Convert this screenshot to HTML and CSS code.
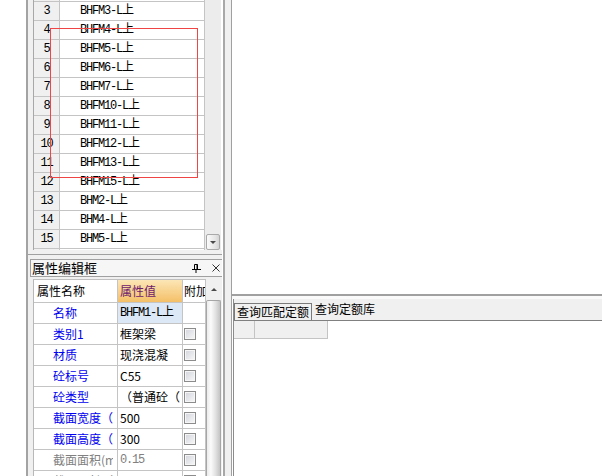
FILE: index.html
```html
<!DOCTYPE html>
<html lang="zh-CN">
<head>
<meta charset="utf-8">
<title>属性编辑</title>
<link rel="stylesheet" href="styles.css">
</head>
<body>
<div class="app">
  <div class="strip"></div>
  <div class="dock">
    <div class="list-panel">
      <div class="list-grid">
        <div class="list-rows">
          <div class="list-inner">
            <div class="lrow"><span class="lnum"></span><span class="lname"></span></div>
            <div class="lrow"><span class="lnum">3</span><span class="lname">BHFM3-L上</span></div>
            <div class="lrow"><span class="lnum">4</span><span class="lname">BHFM4-L上</span></div>
            <div class="lrow"><span class="lnum">5</span><span class="lname">BHFM5-L上</span></div>
            <div class="lrow"><span class="lnum">6</span><span class="lname">BHFM6-L上</span></div>
            <div class="lrow"><span class="lnum">7</span><span class="lname">BHFM7-L上</span></div>
            <div class="lrow"><span class="lnum">8</span><span class="lname">BHFM10-L上</span></div>
            <div class="lrow"><span class="lnum">9</span><span class="lname">BHFM11-L上</span></div>
            <div class="lrow"><span class="lnum">10</span><span class="lname">BHFM12-L上</span></div>
            <div class="lrow"><span class="lnum">11</span><span class="lname">BHFM13-L上</span></div>
            <div class="lrow"><span class="lnum">12</span><span class="lname">BHFM15-L上</span></div>
            <div class="lrow"><span class="lnum">13</span><span class="lname">BHM2-L上</span></div>
            <div class="lrow"><span class="lnum">14</span><span class="lname">BHM4-L上</span></div>
            <div class="lrow"><span class="lnum">15</span><span class="lname">BHM5-L上</span></div>
            <div class="lrow"><span class="lnum"></span><span class="lname"></span></div>
          </div>
        </div>
        <div class="lscroll"><div class="sbtn"><i class="tri-down"></i></div></div>
      </div>
    </div>
    <div class="prop-title">
      <span class="ttl">属性编辑框</span>
      <svg class="pin" width="9" height="9" viewBox="0 0 9 9"><path d="M2.5 0.5h3v5h-3z M5 0.5v5 M0 5.5h9 M4 6v3" stroke="#000" stroke-width="1" fill="none"/></svg>
      <svg class="close" width="8" height="8" viewBox="0 0 8 8"><path d="M0.5 0.5l7 7M7.5 0.5l-7 7" stroke="#333" stroke-width="1" fill="none"/></svg>
    </div>
    <div class="prop-grid">
      <div class="ptable">
        <div class="phead">
          <div class="pname">属性名称</div>
          <div class="pval">属性值</div>
          <div class="pext"><span class="clip">附加</span></div>
        </div>
        <div class="prow">
          <div class="pname"><span class="clip">名称</span></div>
          <div class="pval sel"><span class="clip mono">BHFM1-L上</span></div>
          <div class="pext"></div>
        </div>
        <div class="prow">
          <div class="pname"><span class="clip">类别1</span></div>
          <div class="pval"><span class="clip">框架梁</span></div>
          <div class="pext"><span class="chk"></span></div>
        </div>
        <div class="prow">
          <div class="pname"><span class="clip">材质</span></div>
          <div class="pval"><span class="clip">现浇混凝</span></div>
          <div class="pext"><span class="chk"></span></div>
        </div>
        <div class="prow">
          <div class="pname"><span class="clip">砼标号</span></div>
          <div class="pval"><span class="clip">C55</span></div>
          <div class="pext"><span class="chk"></span></div>
        </div>
        <div class="prow">
          <div class="pname"><span class="clip">砼类型</span></div>
          <div class="pval"><span class="clip">（普通砼（</span></div>
          <div class="pext"><span class="chk"></span></div>
        </div>
        <div class="prow">
          <div class="pname"><span class="clip">截面宽度（</span></div>
          <div class="pval"><span class="clip">500</span></div>
          <div class="pext"><span class="chk"></span></div>
        </div>
        <div class="prow">
          <div class="pname"><span class="clip">截面高度（</span></div>
          <div class="pval"><span class="clip">300</span></div>
          <div class="pext"><span class="chk"></span></div>
        </div>
        <div class="prow dim">
          <div class="pname"><span class="clip">截面面积(m</span></div>
          <div class="pval"><span class="clip mono">0.15</span></div>
          <div class="pext"><span class="chk"></span></div>
        </div>
        <div class="prow dim">
          <div class="pname"><span class="clip">截面周长（</span></div>
          <div class="pval"><span class="clip mono"></span></div>
          <div class="pext"><span class="chk"></span></div>
        </div>
      </div>
      <div class="pscroll"><div class="sup"><i class="tri-up"></i></div><div class="thumb"></div></div>
    </div>
  </div>
  <div class="splitter"></div>
  <div class="main">
    <div class="canvas"></div>
    <div class="hsplit"></div>
    <div class="query">
      <div class="tabs"><span class="tab active">查询匹配定额</span><span class="tab">查询定额库</span></div>
      <div class="qbody"><div class="qhead"><span class="qc1"></span><span class="qc2"></span></div></div>
    </div>
  </div>
  <div class="sel-rect"></div>
</div>
</body>
</html>
```
FILE: styles.css
```css
* { box-sizing: content-box; }
html, body { margin: 0; padding: 0; }
body {
  width: 602px;
  height: 476px;
  overflow: hidden;
  background: #fff;
  font-family: "Noto Sans CJK SC", "Noto Sans", sans-serif;
  font-size: 12px;
  color: #000;
}
.app {
  position: relative;
  display: flex;
  width: 602px;
  height: 476px;
  overflow: hidden;
}
.strip { width: 26px; flex: none; background: #fff; }
.dock {
  width: 194px;
  flex: none;
  border-left: 2px solid #a3a3a3;
  background: #f0f0f0;
  display: flex;
  flex-direction: column;
}
.mono {
  font-family: "Liberation Mono", "Noto Sans CJK SC", monospace;
  letter-spacing: -1.2px;
}

/* list grid */
.list-panel {
  flex: none;
  height: 254px;
  border-bottom: 1px solid #a0a0a0;
  padding-left: 5px;
}
.list-grid {
  height: 250px;
  display: flex;
  overflow: hidden;
  border-left: 1px solid #a8a8a8;
  background: #fff;
}
.list-rows { flex: 1; overflow: hidden; }
.list-inner { margin-top: -17px; }
.lrow {
  display: flex;
  height: 18px;
  border-bottom: 1px solid #c4c4c4;
  line-height: 18px;
  font-family: "Liberation Mono", "Noto Sans CJK SC", monospace;
  font-size: 12px;
  letter-spacing: -1.2px;
  white-space: nowrap;
}
.lnum {
  width: 25px;
  flex: none;
  border-right: 1px solid #c4c4c4;
  background: #f0f0f0;
  text-align: center;
}
.lname {
  flex: 1;
  padding-left: 20px;
  border-right: 1px solid #c4c4c4;
  overflow: hidden;
}
.lscroll {
  width: 16px;
  flex: none;
  border-right: 1px solid #fff;
  background: #ececec;
  display: flex;
  flex-direction: column;
  justify-content: flex-end;
}
.sbtn {
  height: 14px;
  margin: 0 1px 0 1px;
  border: 1px solid #a9a9a9;
  border-radius: 2px;
  background: linear-gradient(to right, #fbfbfb, #e4e4e4 70%, #d4d4d4);
  display: flex;
  align-items: center;
  justify-content: center;
}
.tri-down {
  width: 0; height: 0;
  border-left: 3px solid transparent;
  border-right: 3px solid transparent;
  border-top: 3px solid #4a4a4a;
}
.tri-up {
  width: 0; height: 0;
  border-left: 3px solid transparent;
  border-right: 3px solid transparent;
  border-bottom: 3px solid #4a4a4a;
}

/* property title */
.prop-title {
  flex: none;
  margin: 4px -2px 0 2px;
  height: 16px;
  border: 1px solid #a0a0a0;
  background: #f6f6f6;
  display: flex;
  align-items: center;
  padding-left: 1px;
}
.ttl { flex: 1; font-size: 13px; line-height: 16px; }
.pin { margin-right: 11px; }
.close { margin-right: 3px; }

/* property grid */
.prop-grid {
  flex: 1;
  min-height: 0;
  margin: 2px 0 0 5px;
  display: flex;
  overflow: hidden;
}
.ptable {
  width: 172px;
  flex: none;
  border-left: 1px solid #b8b8b8;
  border-top: 1px solid #c0c0c0;
  background: #fff;
}
.phead, .prow {
  display: flex;
  border-bottom: 1px solid #c4c4c4;
  white-space: nowrap;
}
.phead { height: 22px; line-height: 22px; }
.prow { height: 20px; line-height: 20px; }
.pname, .pval, .pext { overflow: hidden; border-right: 1px solid #c4c4c4; }
.pname { width: 83px; flex: none; }
.pval { width: 64px; flex: none; }
.pext { width: 22px; flex: none; }
.clip { display: block; overflow: hidden; white-space: nowrap; }
.phead .pname { padding-left: 3px; width: 80px; }
.phead .pval {
  padding-left: 2px;
  width: 62px;
  background: linear-gradient(#fce6b6, #f4c068);
  color: #6e1a6e;
}
.phead .pext { padding-left: 1px; width: 21px; }
.prow .pname { padding-left: 19px; padding-right: 4px; width: 60px; color: #0000f0; }
.prow.dim .pname { color: #808080; }
.prow .pval { padding-left: 2px; width: 62px; }
.prow.dim .pval { color: #808080; }
.pval.sel { background: #dde8f7; }
.prow .pext { padding-left: 1px; width: 21px; }
.chk {
  display: block;
  width: 10px;
  height: 10px;
  margin-top: 4px;
  border: 1px solid #8c8c8c;
  box-shadow: inset 0 0 0 1px #f6f6f6;
  background: linear-gradient(135deg, #d2d4dc, #f8f8f8);
}
.pscroll {
  width: 16px;
  flex: none;
  background: #f0f0f0;
  display: flex;
  flex-direction: column;
}
.sup {
  height: 21px;
  flex: none;
  display: flex;
  align-items: center;
  justify-content: center;
}
.thumb {
  flex: 1;
  margin-right: 1px;
  border: 1px solid #a6a6a6;
  border-bottom: none;
  border-radius: 2px 2px 0 0;
  background: linear-gradient(to right, #ececec, #fbfbfb 30%, #e2e2e2 65%, #c4c4c4);
}

/* splitter */
.splitter {
  width: 10px;
  flex: none;
  background: linear-gradient(to right, #fff 0 1px, #a8a8a8 1px 3px, #f0f0f0 3px 9px, #a0a0a0 9px 10px);
}

/* main area */
.main {
  flex: 1;
  min-width: 0;
  display: flex;
  flex-direction: column;
  background: #fff;
}
.canvas { flex: none; height: 294px; background: #fff; }
.hsplit {
  flex: none;
  height: 5px;
  background: linear-gradient(#a0a0a0 0 2px, #fafafa 2px);
}
.query {
  flex: 1;
  display: flex;
  flex-direction: column;
  margin-left: 1px;
  border-left: 1px solid #8c8c8c;
  background: #fff;
}
.tabs {
  flex: none;
  height: 21px;
  background: #f0f0f0;
  border-bottom: 1px solid #808080;
  display: flex;
  align-items: flex-end;
}
.tab {
  height: 16px;
  line-height: 16px;
  padding: 0 2px;
  white-space: nowrap;
}
.tab.active {
  border: 1px solid #7a7a7a;
  border-bottom: none;
}
.tab + .tab {
  align-self: flex-start;
  margin-top: 2px;
  padding-left: 3px;
}
.qbody { flex: 1; }
.qhead { display: flex; height: 18px; }
.qhead span {
  background: #f0f0f0;
  border-right: 1px solid #c4c4c4;
  border-bottom: 1px solid #c4c4c4;
}
.qc1 { width: 20px; }
.qc2 { width: 72px; }

/* red selection overlay */
.sel-rect {
  position: absolute;
  left: 50px;
  top: 28px;
  width: 146px;
  height: 148px;
  border: 1px solid #f04545;
  pointer-events: none;
}
```
